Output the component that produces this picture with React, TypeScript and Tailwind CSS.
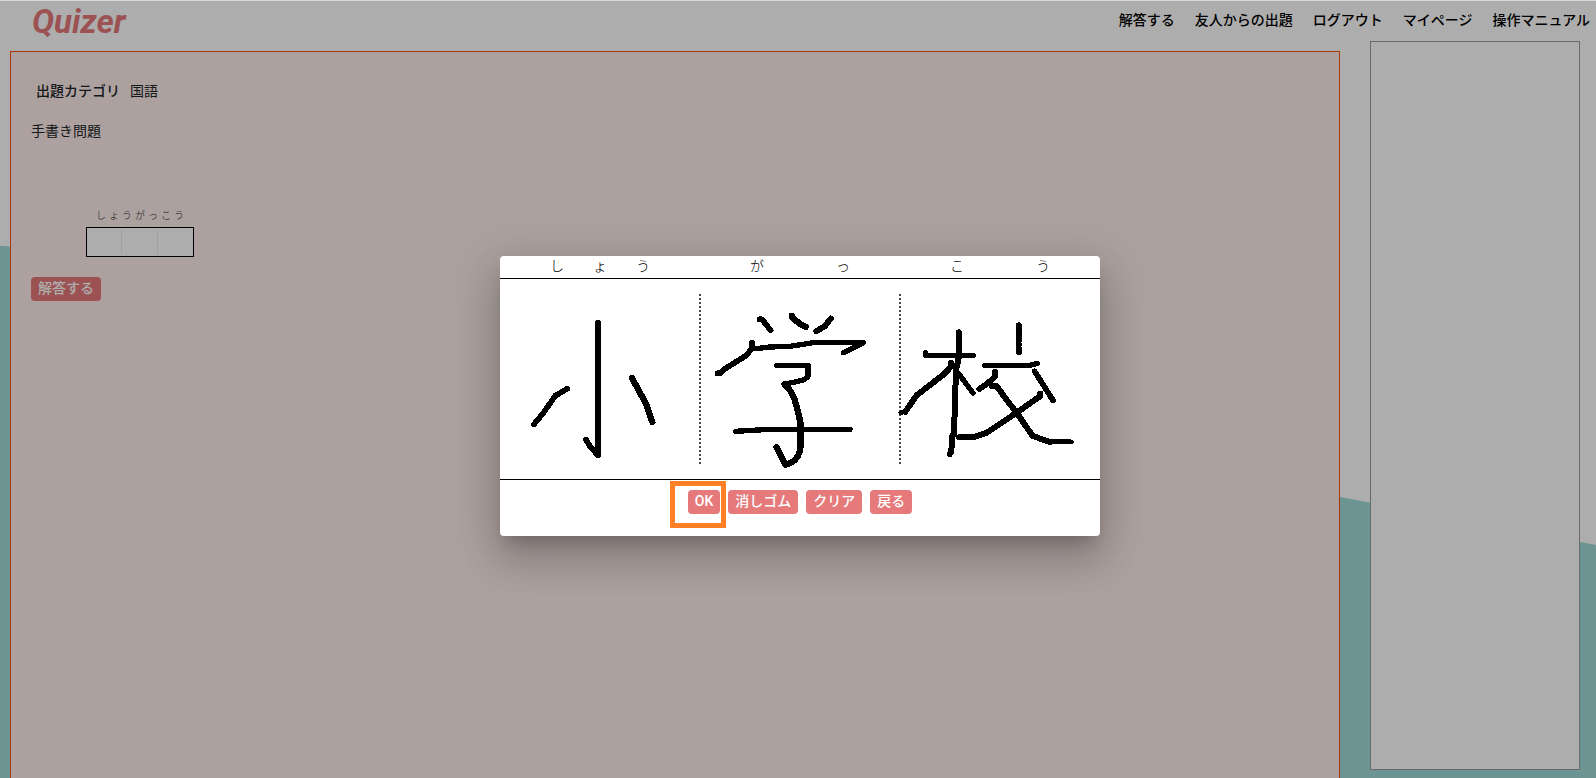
const NAV_LINKS = ['解答する', '友人からの出題', 'ログアウト', 'マイページ', '操作マニュアル'];
const READINGS = ['しょう', 'がっ', 'こう'];

function ActionButton({ label }: { label: string }) {
  return (
    <button
      type="button"
      className="h-6 cursor-pointer rounded bg-[#e67a7b] px-[7px] pb-[2px] text-sm leading-[22px] font-medium text-white"
    >
      {label}
    </button>
  );
}

function Backdrop() {
  return (
    <svg
      aria-hidden="true"
      className="absolute inset-0 -z-10 h-full w-full"
      viewBox="0 0 1596 777"
      preserveAspectRatio="none"
    >
      <path d="M0 245 C8 245 12 246 30 249 L1340 496 L1596 544 V777 H0 Z" fill="#9edad8" />
    </svg>
  );
}

function WritingCanvas() {
  return (
    <svg
      role="img"
      aria-label="小学校"
      className="block h-[200px] w-full"
      viewBox="0 0 600 200"
      shapeRendering="crispEdges"
    >
      <g stroke="#444" strokeWidth="2" strokeDasharray="2 2">
        <path d="M200 15V185" />
        <path d="M400 15V185" />
      </g>
      <g fill="none" stroke="#000" strokeLinecap="round" strokeLinejoin="round">
        <g transform="translate(-10 -39) scale(.33333)" strokeWidth="19">
          <path strokeWidth="18" d="M324 248V645" />
          <path strokeWidth="17" d="M288 599L300 619L324 646" />
          <path d="M132 553L160 519L196 467L232 446" strokeWidth="17" />
          <path d="M426 414L470 495L487 546" />
          <path strokeWidth="17" d="M808 238H816L842 271" />
          <path d="M906 227V232L930 252L947 261" />
          <path strokeWidth="17" d="M682 400H690L704 387L768 347L786 325V308" />
          <path strokeWidth="16" d="M798 326L840 321L900 319L970 308H1120L1060 338" />
          <path strokeWidth="16" d="M860 376H954V410L940 420L884 433" />
          <path d="M884 433Q910 455 920 500L932 550V618Q930 650 906 667L886 674L860 622" />
          <path strokeWidth="16" d="M737 574L840 568H1080" />
        </g>
        <g transform="translate(300 -39) scale(.33333)" strokeWidth="18">
          <path d="M49 274L75 258L92 236" />
          <path strokeWidth="16" d="M377 339V346H520" />
          <path d="M477 277V350L468 390L462 580L456 590L454 635L449 643" />
          <path d="M453 368V380L430 404L350 466L316 515" />
          <path strokeWidth="14" d="M316 515L302 518" />
          <path strokeWidth="16" d="M475 400L519 459" />
          <path strokeDasharray="0 11.5" d="M657 256V340" />
          <path strokeWidth="16" d="M554 376H690L712 370" />
          <path strokeWidth="17" d="M585 394V410L560 432L538 447" />
          <path strokeWidth="17" d="M704 394L759 481" />
          <path d="M576 438H590L620 480L650 518L680 562L698 588L750 606" />
          <path strokeWidth="15" d="M750 606H814" />
          <path d="M721 461V468L650 518L595 555L560 578L520 592H477" />
        </g>
      </g>
    </svg>
  );
}

function WritingDialog() {
  return (
    <div className="absolute inset-0 flex items-center justify-center bg-black/32 pt-[13px] pl-1">
      <div
        role="dialog"
        aria-modal="true"
        aria-label="手書き入力"
        className="w-[600px] max-w-full overflow-hidden rounded bg-white pb-[22px] shadow-[0_11px_15px_-7px_rgba(0,0,0,0.2),0_24px_38px_3px_rgba(0,0,0,0.14),0_9px_46px_8px_rgba(0,0,0,0.12)]"
      >
        <div className="grid h-[22px] grid-cols-3 text-sm leading-5 font-light">
          {READINGS.map((reading) => (
            <div key={reading} className="flex justify-between px-[50px]">
              {[...reading].map((kana) => (
                <span key={kana}>{kana}</span>
              ))}
            </div>
          ))}
        </div>
        <div className="border-y border-black">
          <WritingCanvas />
        </div>
        <div className="flex justify-center gap-2 pt-[10px]">
          <div className="relative flex">
            <ActionButton label="OK" />
            <span className="pointer-events-none absolute -top-[9px] -left-[18px] h-[47px] w-14 border-[5px] border-[#ff7f27]" />
          </div>
          <ActionButton label="消しゴム" />
          <ActionButton label="クリア" />
          <ActionButton label="戻る" />
        </div>
      </div>
    </div>
  );
}

export default function App() {
  return (
    <div className="relative isolate flex h-screen flex-col overflow-hidden border-t border-[#dadada] bg-white font-[Roboto,'Noto_Sans_CJK_JP',sans-serif] text-sm text-black">
      <Backdrop />
      <header className="flex h-10 shrink-0 items-center justify-between pr-[6px] pl-8">
        <a href="#" className="pt-[2px] text-[33px] leading-10 font-bold text-[#e67a7b] italic">
          Quizer
        </a>
        <nav className="flex gap-5 pb-[2px] font-medium">
          {NAV_LINKS.map((link) => (
            <a key={link} href="#">
              {link}
            </a>
          ))}
        </nav>
      </header>
      <div className="flex min-h-0 flex-1 gap-[30px] pr-4 pl-[10px]">
        <main className="mt-[10px] flex-1 border border-b-0 border-[#fc5200] bg-[#ffedeb] px-5 pt-[29px] leading-5 text-[#212529]">
          <dl className="flex gap-[10px] px-[5px]">
            <dt className="font-medium">出題カテゴリ</dt>
            <dd>国語</dd>
          </dl>
          <p className="mt-5">手書き問題</p>
          <div className="mt-[68px] ml-[55px] w-[108px]">
            <div className="flex justify-center gap-[3px] text-[10px] leading-[14px] font-light">
              {[...READINGS.join('')].map((kana, index) => (
                <span key={index}>{kana}</span>
              ))}
            </div>
            <div className="mt-1 grid h-[30px] grid-cols-3 divide-x divide-[#ebebeb] border border-black bg-white py-[2px]">
              <span />
              <span />
              <span />
            </div>
          </div>
          <div className="mt-5 flex">
            <ActionButton label="解答する" />
          </div>
        </main>
        <aside className="mb-2 w-[210px] border border-[#9d9d9d] bg-white" />
      </div>
      <WritingDialog />
    </div>
  );
}
